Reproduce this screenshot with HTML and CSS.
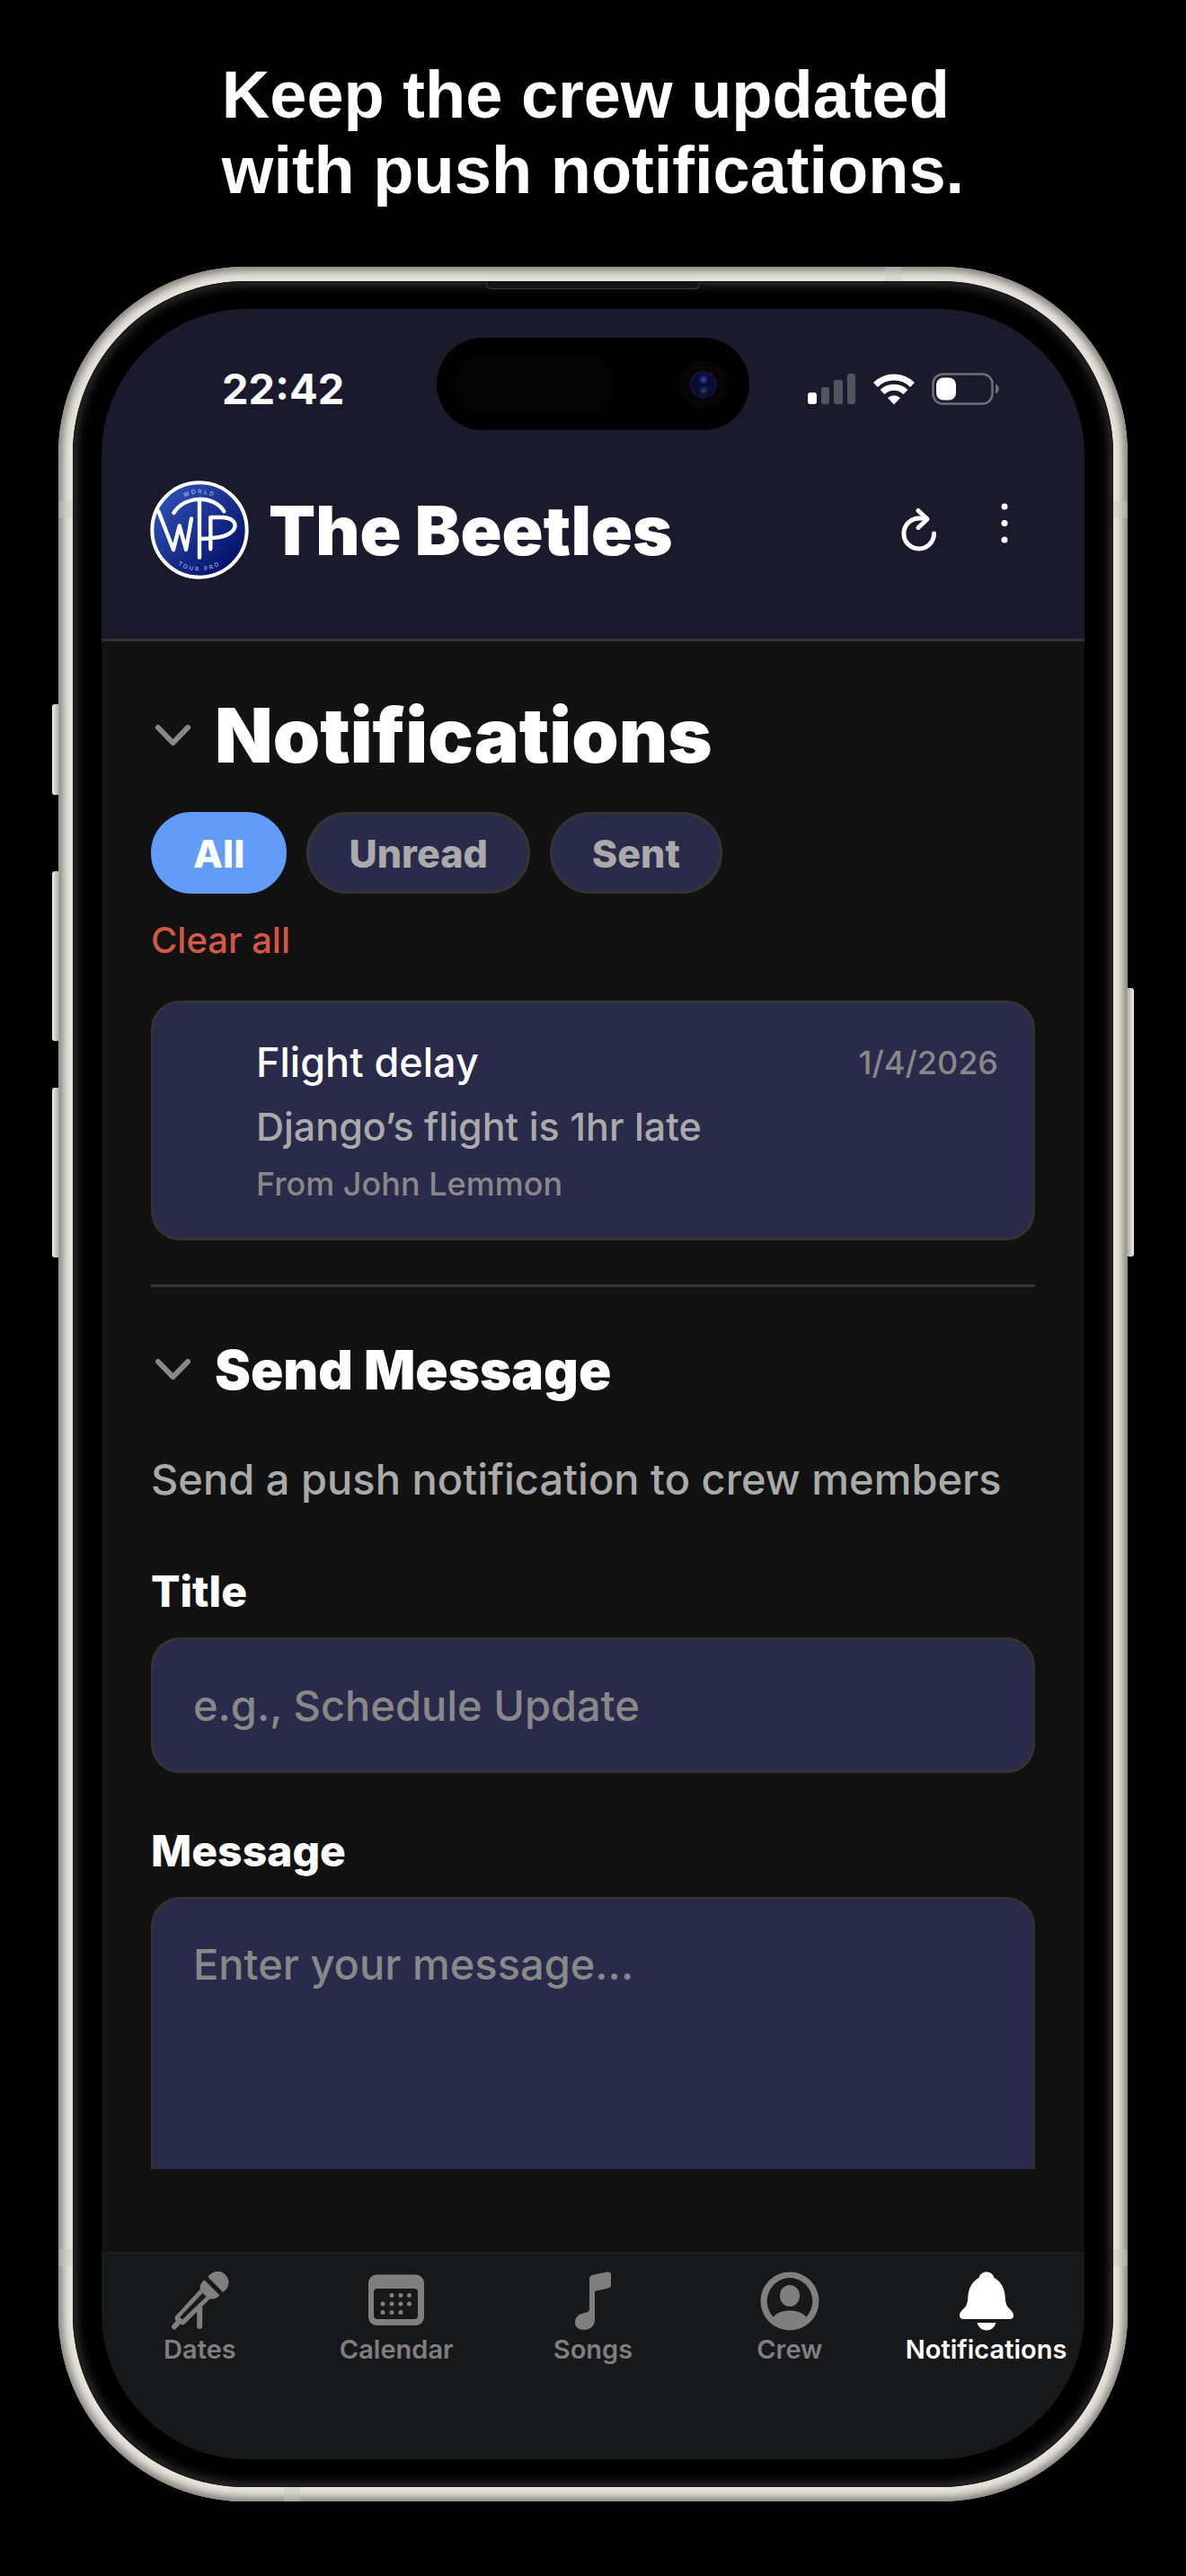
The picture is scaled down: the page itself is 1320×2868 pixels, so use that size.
FILE: index.html
```
<!DOCTYPE html>
<html lang="en">
<head>
    <meta charset="UTF-8">
    <meta name="viewport" content="width=device-width, initial-scale=1">
    <title>The Beetles - Notifications</title>
    <link rel="stylesheet" href="styles.css">
</head>
<body>
    <h2 class="caption">Keep the crew updated<br>with push notifications.</h2>

    <div class="phone">
        <span class="side-button action"></span>
        <span class="side-button volume-up"></span>
        <span class="side-button volume-down"></span>
        <span class="side-button power"></span>
        <span class="antenna left-top"></span>
        <span class="antenna left-bottom"></span>
        <span class="antenna right-top"></span>
        <span class="antenna right-bottom"></span>
        <span class="antenna top"></span>
        <span class="antenna bottom"></span>

        <div class="bezel">
            <span class="earpiece"></span>
            <div class="screen">
                <header class="header">
                    <div class="status-bar">
                        <span class="time">22:42</span>
                        <div class="island">
                            <span class="island-sensor"></span>
                            <span class="island-camera"></span>
                        </div>
                        <div class="status-icons">
                            <svg width="54" height="36" viewBox="0 0 54 36" fill="#fff">
                                <rect x="0" y="22" width="10" height="13" rx="3"/>
                                <g opacity=".25">
                                    <rect x="15" y="16" width="9" height="19" rx="3"/>
                                    <rect x="29" y="8" width="10" height="27" rx="3"/>
                                    <rect x="44" y="1" width="9" height="34" rx="3"/>
                                </g>
                            </svg>
                            <svg width="46" height="36" viewBox="0 0 46 36">
                                <g fill="none" stroke="#fff" stroke-width="7">
                                    <path d="M2.500 13.500a29 29 0 0 1 41 0"/>
                                    <path d="M10 21.500a18.500 18.500 0 0 1 26 0"/>
                                </g>
                                <path d="M23 35.500l-7-7.500a10 10 0 0 1 14 0z" fill="#fff"/>
                            </svg>
                            <svg width="75" height="36" viewBox="0 0 75 36">
                                <rect x="1.500" y="1.500" width="66" height="33" rx="11" fill="none" stroke="#6f6f7c" stroke-width="2.500"/>
                                <path d="M71 12.500c5 2 5 9 0 11z" fill="#6f6f7c"/>
                                <rect x="5" y="5.500" width="22" height="25" rx="8" fill="#fff"/>
                            </svg>
                        </div>
                    </div>

                    <div class="band-bar">
                        <svg class="logo" viewBox="52 45 330 330" role="img" aria-label="World Tour Pro">
                            <defs>
                                <linearGradient id="logo-fill" x1="0" y1="0" x2="1" y2="1">
                                    <stop offset=".2" stop-color="#2a49ad"/>
                                    <stop offset=".85" stop-color="#05126b"/>
                                </linearGradient>
                                <path id="arc-top" d="M107 210a110 122 0 0 1 220 0"/>
                                <path id="arc-bottom" d="M82 210a135 137 0 0 0 270 0"/>
                            </defs>
                            <circle cx="217" cy="210" r="158" fill="url(#logo-fill)" stroke="#fff" stroke-width="12"/>
                            <g fill="none" stroke="#fff" stroke-width="13" stroke-linecap="round" stroke-linejoin="round">
                                <path d="M80 148L130 276 150 196 172 276 190 172"/>
                                <path d="M131 153C170 93 264 93 299 148"/>
                                <path d="M217 112V302"/>
                                <path d="M254 274V168H295C355 172 350 228 270 236Q240 240 217 240"/>
                            </g>
                            <g class="logo-text">
                                <text><textPath href="#arc-top" startOffset="50%">WORLD</textPath></text>
                                <text><textPath href="#arc-bottom" startOffset="50%">TOUR PRO</textPath></text>
                            </g>
                        </svg>
                        <span class="band-name">The Beetles</span>
                        <button class="icon-button" aria-label="Refresh">
                            <svg width="42" height="50" viewBox="0 0 42 50" fill="none" stroke="#fff" stroke-width="5" stroke-linecap="round" stroke-linejoin="round">
                                <path d="M38.500 29A16.800 17 0 1 1 21.700 12H30"/>
                                <path d="M21 3.500L31 13 21 22.500"/>
                            </svg>
                        </button>
                        <button class="icon-button" aria-label="More">
                            <svg width="42" height="64" viewBox="0 0 42 64" fill="#fff">
                                <circle cx="21" cy="6" r="3.500"/>
                                <circle cx="21" cy="24.500" r="3.500"/>
                                <circle cx="21" cy="43" r="3.500"/>
                            </svg>
                        </button>
                    </div>
                </header>

                <main class="content">
                    <section class="notifications">
                        <h1 class="page-title">
                            <svg class="chevron" viewBox="0 0 48 48"><path d="M8 15L24.500 32 41 15"/></svg>
                            Notifications
                        </h1>
                        <div class="filters">
                            <button class="filter active">All</button>
                            <button class="filter">Unread</button>
                            <button class="filter">Sent</button>
                        </div>
                        <button class="clear-all">Clear all</button>

                        <article class="card">
                            <div class="card-top">
                                <h3 class="card-title">Flight delay</h3>
                                <time class="card-date">1/4/2026</time>
                            </div>
                            <p class="card-text">Django’s flight is 1hr late</p>
                            <p class="card-from">From John Lemmon</p>
                        </article>
                    </section>

                    <form class="send-message">
                        <h2 class="section-title">
                            <svg class="chevron" viewBox="0 0 48 48"><path d="M8 15L24.500 32 41 15"/></svg>
                            Send Message
                        </h2>
                        <p class="hint">Send a push notification to crew members</p>
                        <label for="title">Title</label>
                        <input type="text" id="title" placeholder="e.g., Schedule Update">
                        <label for="message">Message</label>
                        <textarea id="message" placeholder="Enter your message..."></textarea>
                    </form>
                </main>

                <nav class="tab-bar">
                    <a class="tab" href="#dates">
                        <svg viewBox="0 0 66 66">
                            <path d="M42.500 6a12.300 12.300 0 1 1 16.500 17z"/>
                            <path d="M38.500 9.500L55.500 26.500C52 30 48 31 44 30.500L33.500 20C33 16 35 12 38.500 9.500z"/>
                            <path fill-rule="evenodd" d="M33.500 20L44.500 30.500 17 58Q14.500 60.500 12 58.500L7 55Q4.500 53 6 50zM36.500 24L11 51 14 53.500 40.500 28z"/>
                            <path d="M9 57L5 61.500M33.200 40V61" fill="none" stroke="currentColor" stroke-width="6" stroke-linecap="round"/>
                        </svg>
                        Dates
                    </a>
                    <a class="tab" href="#calendar">
                        <svg viewBox="0 0 66 66">
                            <path fill-rule="evenodd" d="M11 3.500H55a9 9 0 0 1 9 9V51a9 9 0 0 1-9 9H11a9 9 0 0 1-9-9V12.500a9 9 0 0 1 9-9zM12 19a4 4 0 0 0-4 4V49a4 4 0 0 0 4 4H53a4 4 0 0 0 4-4V23a4 4 0 0 0-4-4z"/>
                            <path d="M28 26.500h0M38 26.500h0M47.500 26.500h0M18 36h0M28 36h0M38 36h0M47.500 36h0M18 45.500h0M28 45.500h0M38 45.500h0" stroke="currentColor" stroke-width="5" stroke-linecap="round"/>
                        </svg>
                        Calendar
                    </a>
                    <a class="tab" href="#songs">
                        <svg viewBox="0 0 66 66">
                            <path d="M29 8Q29 5 32 4L49 .5Q53 0 53 3V15Q53 17.500 50 18.500L35 22V54C35 61 29 65 23 65C17 65 13 61.500 13 57C13 50 18 47 24 46Q29 45.500 29 42z"/>
                        </svg>
                        Songs
                    </a>
                    <a class="tab" href="#crew">
                        <svg viewBox="0 0 66 66">
                            <path fill-rule="evenodd" d="M33 .5a32.500 32.500 0 1 1 0 65a32.500 32.500 0 1 1 0-65zM33 7a26 26 0 0 0-18.500 43.500C19 46 25 43.500 33 43.500S47 46 51.500 50.500A26 26 0 0 0 33 7z"/>
                            <ellipse cx="33" cy="27" rx="11" ry="12"/>
                        </svg>
                        Crew
                    </a>
                    <a class="tab active" href="#notifications">
                        <svg viewBox="0 0 66 66">
                            <path d="M33 .5C37 .5 40.500 3 41.500 7C49 11 52.500 18 53.500 26C54 33 54.500 37 57 40C60 43 63 45 63 49Q63 53 58.500 53H7.500Q3 53 3 49C3 45 6 43 9 40C11.500 37 12 33 12.500 26C13.500 18 17 11 24.500 7C25.500 3 29 .5 33 .5z"/>
                            <path d="M22.500 57H43.500C42 62 38 65.500 33 65.500S24 62 22.500 57z"/>
                        </svg>
                        Notifications
                    </a>
                </nav>
            </div>
        </div>
    </div>
</body>
</html>
```
FILE: styles.css
```
:root {
    --bg-color: #121212;
    --header-bg: #1a1a2c;
    --surface: #2a2a4b;
    --border-color: #333333;
    --tab-bg: #17181a;
    --text-color: #ffffff;
    --text-secondary: #aaaaaa;
    --text-muted: #888888;
    --primary-color: #629bf8;
    --danger-color: #d65745;
}

* {
    box-sizing: border-box;
}

body {
    margin: 0;
    padding: 64px 65px 80px;
    background-color: #000000;
    color: var(--text-color);
    font-family: Inter, "Liberation Sans", sans-serif;
}

h1, h2, h3, p {
    margin: 0;
}

button {
    padding: 0;
    border: none;
    background: none;
    color: inherit;
    font-family: inherit;
    cursor: pointer;
}

.caption {
    width: max-content;
    margin: 0 auto 65px;
    font-family: "Liberation Sans", Arial, sans-serif;
    font-size: 74px;
    line-height: 84px;
    font-weight: 700;
}

/* Phone frame */

.phone {
    position: relative;
    padding: 16px;
    border-radius: 208px;
    background-color: #e6e3db;
    box-shadow: inset 0 0 8px 5px #85827a;
}

.side-button {
    position: absolute;
    left: -7px;
    width: 8px;
    height: 189px;
    border-radius: 3px 0 0 3px;
    background: linear-gradient(to right, #f0eee8, #a8a59d);
}

.action {
    top: 487px;
    height: 101px;
}

.volume-up {
    top: 673px;
}

.volume-down {
    top: 914px;
}

.power {
    top: 803px;
    left: auto;
    right: -7px;
    height: 299px;
    border-radius: 0 3px 3px 0;
    background: linear-gradient(to left, #f0eee8, #a8a59d);
}

.antenna {
    position: absolute;
    width: 16px;
    height: 19px;
    background-color: rgba(200, 197, 188, 0.4);
}

.left-top {
    top: 261px;
    left: 0;
}

.left-bottom {
    bottom: 262px;
    left: 0;
}

.right-top {
    top: 261px;
    right: 0;
}

.right-bottom {
    bottom: 262px;
    right: 0;
}

.antenna.top {
    top: 0;
    right: 252px;
    width: 18px;
    height: 16px;
}

.antenna.bottom {
    bottom: 0;
    left: 251px;
    width: 18px;
    height: 16px;
}

.bezel {
    position: relative;
    padding: 31px 32px;
    border-radius: 192px;
    background-color: #000000;
    box-shadow: inset 0 0 0 2px #1c1b1a, inset 0 0 14px 2px #454443;
}

.earpiece {
    position: absolute;
    top: 1px;
    left: 50%;
    width: 238px;
    height: 8px;
    margin-left: -119px;
    border: 1px solid #3a3a3a;
    border-top: none;
    border-radius: 0 0 6px 6px;
    background-color: #151515;
}

.screen {
    overflow: hidden;
    border-radius: 162px;
    background-color: var(--bg-color);
}

/* Header */

.header {
    padding-top: 32px;
    border-bottom: 3px solid var(--border-color);
    background-color: var(--header-bg);
}

.status-bar {
    display: grid;
    grid-template-columns: 1fr 348px 1fr;
    align-items: center;
}

.time {
    padding: 10px 0 0 134px;
    font-size: 47px;
    line-height: 56px;
    font-weight: 700;
}

.island {
    display: flex;
    justify-content: space-between;
    align-items: center;
    height: 103px;
    padding: 0 24px 0 19px;
    border-radius: 52px;
    background-color: #000000;
}

.island-sensor {
    width: 180px;
    height: 64px;
    border-radius: 32px;
    background-color: #040404;
}

.island-camera {
    width: 54px;
    height: 54px;
    border-radius: 50%;
    background:
        radial-gradient(circle at 50% 40%, #444e9c 0, #15185c 4px, transparent 6px),
        radial-gradient(circle at 50% 62%, #1a5361 0, #0e1a44 4px, transparent 6px),
        radial-gradient(circle, #070838 0, #0b0c35 12px, #151530 14px, #080508 16px, #0a0507 27px);
}

.status-icons {
    display: flex;
    justify-content: flex-end;
    gap: 19px;
    padding: 10px 95px 0 0;
}

.band-bar {
    display: flex;
    align-items: center;
    padding: 56px 68px 66px 54px;
}

.logo {
    width: 110px;
    height: 110px;
}

.logo-text {
    fill: #c3cbe8;
    font-size: 19px;
    letter-spacing: 7px;
    text-anchor: middle;
}

.band-name {
    flex: 1;
    margin-left: 22px;
    font-size: 76px;
    line-height: 90px;
    font-weight: 900;
}

.icon-button {
    margin-left: 54px;
}

.icon-button svg {
    display: block;
}

/* Content */

.content {
    padding: 53px 55px 93px;
}

.page-title,
.section-title {
    display: flex;
    align-items: center;
    gap: 23px;
}

.page-title {
    font-size: 84px;
    line-height: 104px;
    font-weight: 900;
}

.section-title {
    margin-top: 56px;
    font-size: 60px;
    line-height: 72px;
    font-weight: 900;
}

.chevron {
    width: 48px;
    height: 48px;
    fill: none;
    stroke: var(--text-muted);
    stroke-width: 6;
    stroke-linecap: round;
    stroke-linejoin: round;
}

.filters {
    display: flex;
    gap: 22px;
    margin-top: 33px;
}

.filter {
    height: 91px;
    padding: 0 44px;
    border: 3px solid var(--border-color);
    border-radius: 46px;
    background-color: var(--surface);
    color: var(--text-secondary);
    font-size: 43px;
    font-weight: 800;
}

.filter.active {
    border-color: var(--primary-color);
    background-color: var(--primary-color);
    color: var(--text-color);
}

.clear-all {
    display: block;
    margin-top: 27px;
    color: var(--danger-color);
    font-size: 40px;
    line-height: 50px;
    font-weight: 500;
}

.card {
    margin-top: 42px;
    padding: 38px 38px 37px 114px;
    border: 3px solid var(--border-color);
    border-radius: 32px;
    background-color: var(--surface);
}

.card-top {
    display: flex;
    justify-content: space-between;
    align-items: center;
}

.card-title {
    font-size: 45px;
    line-height: 56px;
    font-weight: 500;
}

.card-date,
.card-from {
    color: var(--text-muted);
    font-size: 36px;
    line-height: 46px;
    font-weight: 500;
}

.card-text {
    margin-top: 16px;
    color: var(--text-secondary);
    font-size: 43px;
    line-height: 54px;
    font-weight: 500;
}

.card-from {
    margin-top: 14px;
}

.send-message {
    margin-top: 49px;
    border-top: 3px solid var(--border-color);
}

.hint {
    margin-top: 56px;
    color: var(--text-secondary);
    font-size: 47px;
    line-height: 60px;
    font-weight: 500;
}

.send-message label {
    display: block;
    margin-top: 58px;
    font-size: 48px;
    line-height: 58px;
    font-weight: 800;
}

.send-message .hint + label {
    margin-top: 66px;
}

.send-message input,
.send-message textarea {
    display: block;
    width: 100%;
    margin: 22px 0 0;
    padding: 42px 44px;
    border: 3px solid var(--border-color);
    border-radius: 32px;
    outline: none;
    background-color: var(--surface);
    color: var(--text-color);
    font-family: inherit;
    font-size: 47px;
    line-height: 60px;
    font-weight: 500;
}

.send-message input {
    height: 151px;
}

.send-message textarea {
    height: 303px;
    border-bottom: none;
    border-radius: 32px 32px 0 0;
    resize: none;
}

::placeholder {
    color: var(--text-muted);
    opacity: 1;
}

/* Tab bar */

.tab-bar {
    display: grid;
    grid-template-columns: repeat(5, minmax(0, 1fr));
    padding: 20px 0 104px;
    border-top: 1px solid #26272a;
    background-color: var(--tab-bg);
}

.tab {
    display: flex;
    flex-direction: column;
    align-items: center;
    gap: 3px;
    color: #7f7f80;
    font-size: 29px;
    line-height: 36px;
    font-weight: 600;
    text-decoration: none;
}

.tab svg {
    width: 66px;
    height: 66px;
    fill: currentColor;
}

.tab.active {
    color: var(--text-color);
}
```
